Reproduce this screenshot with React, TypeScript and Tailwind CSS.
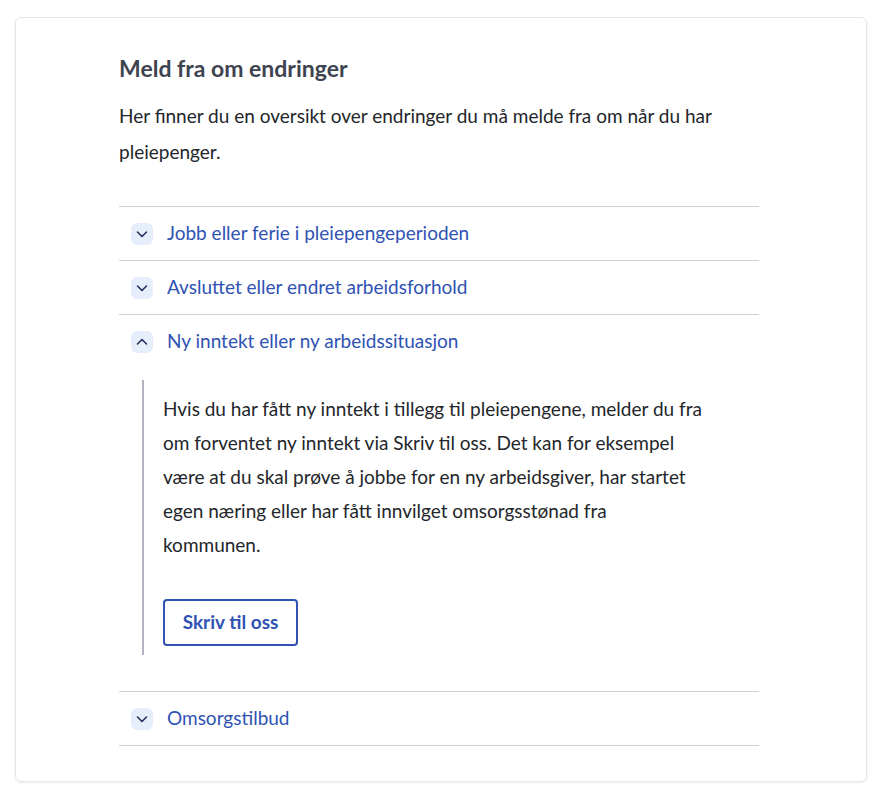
import React, { useState } from 'react';

const items = [
  { id: 'jobb', title: 'Jobb eller ferie i pleiepengeperioden' },
  { id: 'avsluttet', title: 'Avsluttet eller endret arbeidsforhold' },
  { id: 'inntekt', title: 'Ny inntekt eller ny arbeidssituasjon' },
  { id: 'omsorg', title: 'Omsorgstilbud' },
];

const Chevron: React.FC<{ open: boolean }> = ({ open }) => (
  <span className="flex h-[22px] w-[22px] shrink-0 items-center justify-center rounded-md bg-[#e6eefc]">
    <svg width="14" height="14" viewBox="0 0 14 14" fill="none">
      <path
        d={open ? 'M2.5 9L7 4.5L11.5 9' : 'M2.5 5L7 9.5L11.5 5'}
        stroke="#23325e"
        strokeWidth="1.6"
        strokeLinecap="round"
        strokeLinejoin="round"
      />
    </svg>
  </span>
);

const App: React.FC = () => {
  const [openId, setOpenId] = useState<string | null>('inntekt');

  return (
    <div className="min-h-screen bg-white px-[15px] pt-[17px] font-['Lato',sans-serif] text-[#23262a]">
      <div className="h-[765px] rounded-md border border-[#e6e6e6] shadow-[0_1px_3px_rgba(0,0,0,0.08)]">
        <div className="ml-[103px] w-[640px] pt-[36px]">
          <h2 className="text-[23px] leading-[28px] font-bold text-[#3e4350]">Meld fra om endringer</h2>
          <p className="mt-4 text-[19px] leading-[36px]">
            Her finner du en oversikt over endringer du må melde fra om når du har pleiepenger.
          </p>

          <div className="mt-9 border-t border-[#cfcfd6]">
            {items.map((item) => {
              const open = openId === item.id;
              return (
                <div key={item.id} className="border-b border-[#cfcfd6]">
                  <button
                    onClick={() => setOpenId(open ? null : item.id)}
                    className="flex h-[53px] w-full items-center gap-[14px] pl-3 text-left text-[19px] text-[#2f52b3]"
                  >
                    <Chevron open={open} />
                    <span>{item.title}</span>
                  </button>
                  {open && (
                    <div className="mt-3 mb-9 ml-[23px] border-l-2 border-[#b3b3c2] pt-3 pb-[9px] pl-[19px]">
                      <p className="w-[544px] text-[19px] leading-[34px]">
                        Hvis du har fått ny inntekt i tillegg til pleiepengene, melder du fra om forventet ny
                        inntekt via Skriv til oss. Det kan for eksempel være at du skal prøve å jobbe for en ny
                        arbeidsgiver, har startet egen næring eller har fått innvilget omsorgsstønad fra kommunen.
                      </p>
                      <button className="mt-[37px] h-[47px] w-[135px] rounded border-2 border-[#2f52b3] text-[19px] font-bold text-[#2f52b3]">
                        Skriv til oss
                      </button>
                    </div>
                  )}
                </div>
              );
            })}
          </div>
        </div>
      </div>
    </div>
  );
};

export default App;
